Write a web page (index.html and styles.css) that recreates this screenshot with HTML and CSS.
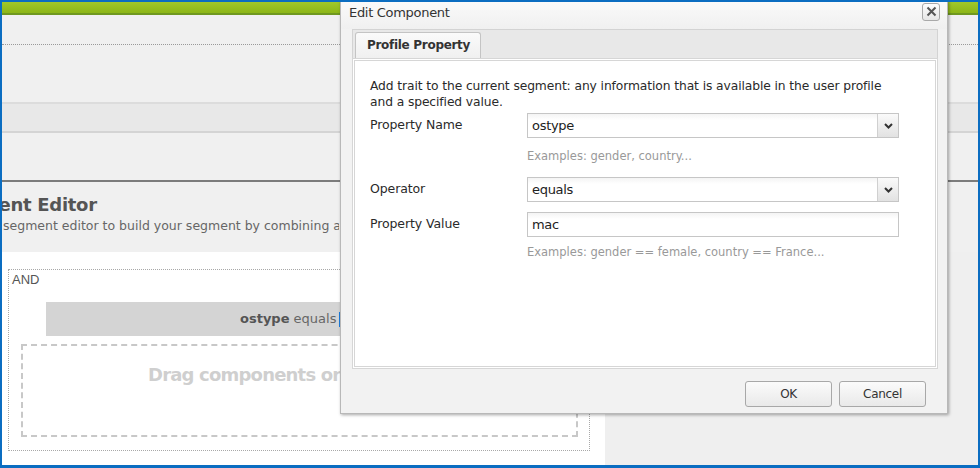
FILE: index.html
```html
<!DOCTYPE html>
<html>
<head>
<meta charset="utf-8">
<link rel="stylesheet" href="styles.css">
</head>
<body>
<div class="frame">
  <div class="greenbar"></div>
  <div class="toolbar"><div class="dotline"></div></div>
  <div class="band"></div>
  <div class="subbar"></div>
  <div class="heading">
    <h1 class="title">Segment Editor</h1>
    <p class="subtitle">segment editor to build your segment by combining any of the available traits.</p>
  </div>
  <div class="main">
    <div class="canvas">
      <div class="andbox">
        <div class="andlabel">AND</div>
        <div class="trait"><b>ostype</b> equals <span class="sel"></span></div>
        <div class="dropzone">Drag components or segments here</div>
      </div>
    </div>
    <div class="side"></div>
  </div>

  <div class="dialog">
    <div class="dlg-head">
      <span class="dlg-title">Edit Component</span>
      <span class="close"><svg width="11" height="11" viewBox="0 0 11 11"><path d="M1.5 1.5 L9.5 9.5 M9.5 1.5 L1.5 9.5" stroke="#555" stroke-width="2" fill="none"/></svg></span>
    </div>
    <div class="dlg-body">
      <div class="tabstrip"><div class="tab">Profile Property</div></div>
      <div class="panel">
        <p class="desc">Add trait to the current segment: any information that is available in the user profile and a specified value.</p>
        <div class="row">
          <div class="label">Property Name</div>
          <div class="field">
            <div class="input combo"><span>ostype</span><span class="arrow"><svg width="9" height="6" viewBox="0 0 9 6"><path d="M1 1 L4.5 4.5 L8 1" stroke="#333" stroke-width="2" fill="none"/></svg></span></div>
            <div class="hint hint-first">Examples: gender, country...</div>
          </div>
        </div>
        <div class="row">
          <div class="label">Operator</div>
          <div class="field">
            <div class="input combo"><span>equals</span><span class="arrow"><svg width="9" height="6" viewBox="0 0 9 6"><path d="M1 1 L4.5 4.5 L8 1" stroke="#333" stroke-width="2" fill="none"/></svg></span></div>
          </div>
        </div>
        <div class="row">
          <div class="label">Property Value</div>
          <div class="field">
            <div class="input"><span>mac</span></div>
            <div class="hint">Examples: gender == female, country == France...</div>
          </div>
        </div>
      </div>
    </div>
    <div class="dlg-foot">
      <button class="btn">OK</button>
      <button class="btn">Cancel</button>
    </div>
  </div>
</div>
</body>
</html>
```

FILE: styles.css
```css
* { box-sizing: border-box; }
html, body { margin: 0; padding: 0; }
body { width: 980px; height: 468px; overflow: hidden; font-family: "DejaVu Sans", Verdana, sans-serif; }

.frame {
  position: relative;
  width: 980px;
  height: 468px;
  border: 2px solid #0b6dc1;
  border-bottom-width: 3px;
  background: #f0f0f0;
  overflow: hidden;
  display: flex;
  flex-direction: column;
}

.greenbar {
  height: 13px;
  flex: none;
  background: linear-gradient(#a1c82a, #8cb617);
  border-bottom: 2px solid #6f9820;
}
.toolbar { height: 87px; flex: none; padding-top: 29px; }
.dotline { border-top: 1px dotted #9a9a9a; }
.band {
  height: 31px; flex: none;
  border-top: 2px solid #dcdcdc;
  border-bottom: 2px solid #d4d4d4;
  background: #e8e8e8;
}
.subbar {
  height: 49px; flex: none;
  border-bottom: 2px solid #7c7c7c;
  background: #f0f0f0;
}
.heading { height: 70px; flex: none; padding-top: 12px; overflow: hidden; }
.title {
  margin: 0 0 0 -59px;
  width: 400px;
  font-size: 18px;
  font-weight: bold;
  color: #555;
  line-height: 22px;
  letter-spacing: -0.3px;
}
.subtitle {
  margin: 2px 0 0 1px;
  width: 336px;
  overflow: hidden;
  font-size: 12.5px;
  color: #666;
  line-height: 16px;
  white-space: nowrap;
}

.main { flex: 1; display: flex; }
.canvas { width: 603px; background: #fff; padding: 17px 0 0 6px; }
.side { flex: 1; background: #efefef; }

.andbox {
  width: 582px;
  height: 182px;
  border: 1px dotted #a8a8a8;
  padding: 0 0 0 12px;
}
.andlabel {
  font-family: "Liberation Sans", Arial, sans-serif;
  font-size: 13px;
  color: #555;
  margin: 2px 0 0 -9px;
  line-height: 16px;
}
.trait {
  margin: 14px 0 0 25px;
  width: 520px;
  height: 34px;
  background: #d4d4d4;
  font-size: 13px;
  color: #666;
  line-height: 34px;
  padding-left: 194px;
}
.trait b { color: #555; }
.sel {
  display: inline-block;
  width: 10px; height: 15px;
  border: 2px solid #1a7de0;
  border-right: none;
  background: #d8ecff;
  vertical-align: middle;
  margin-left: -2px;
}
.dropzone {
  margin: 8px 0 0 0;
  width: 557px;
  height: 93px;
  border: 2px dashed #c8c8c8;
  font-size: 18px;
  font-weight: bold;
  color: #cfcfcf;
  padding: 18px 0 0 125px;
  white-space: nowrap;
  overflow: hidden;
  letter-spacing: -0.8px;
}

.dialog {
  position: absolute;
  left: 338px;
  top: -2px;
  width: 608px;
  height: 414px;
  background: #f2f2f2;
  border: 1px solid #b8b8b8;
  box-shadow: 1px 1px 3px rgba(0,0,0,0.35);
  display: flex;
  flex-direction: column;
  font-family: "DejaVu Sans", Verdana, sans-serif;
}
.dlg-head {
  height: 28px;
  flex: none;
  display: flex;
  align-items: center;
  justify-content: space-between;
  padding: 0 7px 5px 8px;
  background: linear-gradient(#fafafa, #f0f0f0);
}
.dlg-title { font-size: 13px; color: #333; letter-spacing: -0.3px; }
.close {
  width: 18px; height: 18px;
  border: 1px solid #a9a9a9;
  border-radius: 3px;
  background: linear-gradient(#fdfdfd, #e6e6e6);
  display: flex; align-items: center; justify-content: center;
  margin-top: -2px;
}
.dlg-body { padding: 0 9px 0 11px; flex: none; }
.tabstrip {
  height: 29px;
  background: #e8e8e8;
  border: 1px solid #d3d3d3;
  border-bottom: none;
  padding: 2px 0 0 2px;
  display: flex;
  align-items: flex-end;
}
.tab {
  width: 126px;
  height: 26px;
  border: 1px solid #c4c4c4;
  border-bottom: none;
  border-radius: 3px 3px 0 0;
  background: linear-gradient(#fafafa, #f0f0f0);
  font-size: 12px;
  font-weight: bold;
  color: #333;
  padding: 5px 0 0 11px;
  letter-spacing: -0.3px;
}
.panel {
  height: 311px;
  background: #fff;
  border: 3px double #d6d6d6;
  padding: 17px 20px 0 15px;
}
.desc {
  margin: 0 0 3px 0;
  width: 535px;
  font-size: 12.3px;
  line-height: 16px;
  color: #2a2a2a;
  letter-spacing: -0.1px;
}
.row { display: flex; margin-bottom: 10px; }
.label {
  width: 157px;
  font-size: 12.5px;
  color: #2a2a2a;
  letter-spacing: -0.1px;
  padding-top: 4px;
}
.field { width: 372px; }
.input {
  height: 25px;
  border: 1px solid #c6c6c6;
  background: linear-gradient(#f4f4f4, #fff 6px);
  display: flex;
  align-items: center;
  justify-content: space-between;
  font-size: 13px;
  color: #222;
  padding-left: 4px;
  letter-spacing: -0.3px;
}
.combo { padding-right: 0; }
.arrow {
  width: 21px;
  height: 23px;
  border-left: 1px solid #d0d0d0;
  background: linear-gradient(#fafafa, #e2e2e2);
  display: flex; align-items: center; justify-content: center;
}
.hint {
  font-size: 11.5px;
  line-height: 14px;
  color: #999;
  margin-top: 8px;
  letter-spacing: 0;
}
.hint-first { margin-top: 11px; margin-bottom: 4px; }
.dlg-foot {
  flex: 1;
  display: flex;
  justify-content: flex-end;
  align-items: flex-start;
  gap: 7px;
  padding: 12px 21px 0 0;
}
.btn {
  width: 87px;
  height: 26px;
  border: 1px solid #a8a8a8;
  border-radius: 3px;
  background: linear-gradient(#fbfbfb, #e9e9e9);
  font-family: "DejaVu Sans", Verdana, sans-serif;
  font-size: 12px;
  color: #333;
  padding: 0;
  letter-spacing: -0.3px;
}
```
